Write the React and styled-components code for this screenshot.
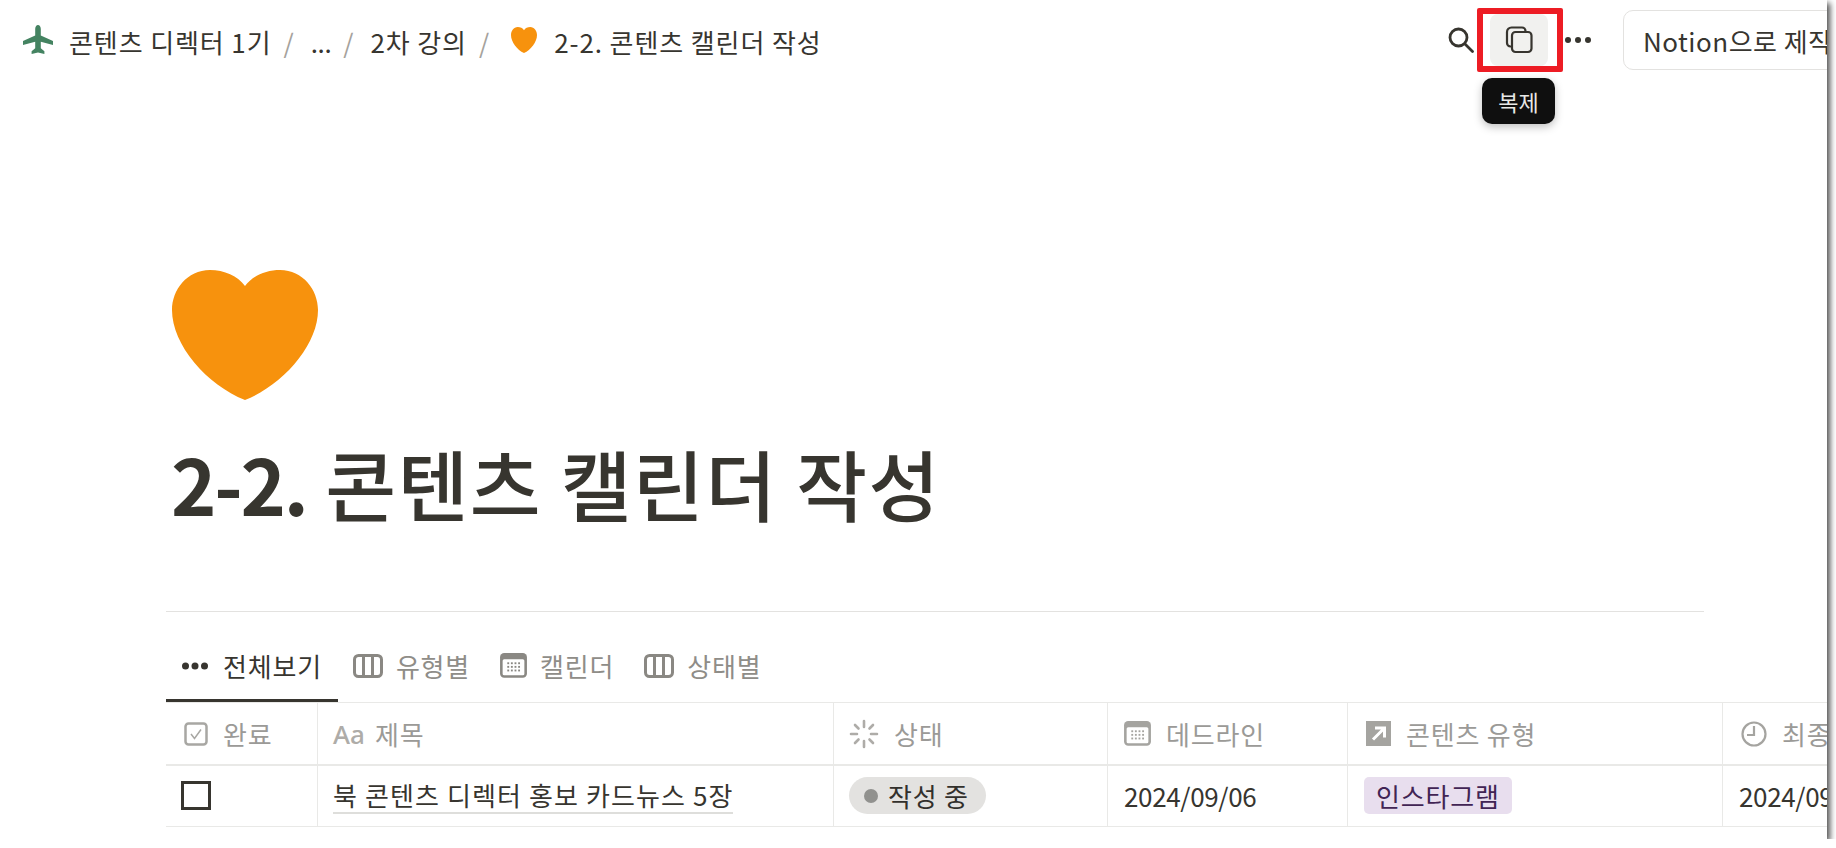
import React from "react";
import styled, { createGlobalStyle } from "styled-components";

const Global = createGlobalStyle`
  html, body { margin: 0; padding: 0; background: #fff; overflow: hidden; }
  body { font-family: "Noto Sans CJK KR", "Noto Sans", sans-serif; }
`;

const Frame = styled.div`
  width: 1827px;
  height: 839px;
  background: #fff;
  overflow: hidden;
  box-shadow: 3px 3px 6px rgba(0, 0, 0, 0.7);
  display: flex;
  flex-direction: column;
`;

const TopBar = styled.header`
  height: 80px;
  flex: none;
  display: flex;
  align-items: center;
  padding-left: 22px;
  color: #37352f;
`;

const Crumb = styled.span`
  font-size: 26px;
  line-height: 32px;
  margin-top: 3px;
  letter-spacing: ${(p) => p.$ls ?? 0.9}px;
  white-space: nowrap;
  color: #37352f;
`;

const Sep = styled.span`
  font-size: 26px;
  margin-top: 3px;
  color: #a5a29c;
  margin-left: 12px;
  margin-right: 17px;
`;

const CrumbIcon = styled.svg`
  flex: none;
  display: block;
  margin-left: ${(p) => p.$ml ?? 0}px;
  margin-right: ${(p) => p.$mr}px;
`;

const Actions = styled.div`
  margin-left: auto;
  margin-right: -36px;
  display: flex;
  align-items: center;
  flex: none;
`;

const SearchSlot = styled.div`
  width: 26px;
  height: 26px;
  margin-right: 16px;
  display: flex;
`;

const CopyAnchor = styled.div`
  position: relative;
  width: 58px;
  height: 52px;
  background: #f1f1ef;
  border-radius: 8px;
  display: flex;
  align-items: center;
  justify-content: center;
`;

const Highlight = styled.div`
  position: absolute;
  left: -13px;
  top: -6px;
  width: 86px;
  height: 64px;
  box-sizing: border-box;
  border: 6px solid #ed1c24;
  border-radius: 2px;
`;

const Tooltip = styled.div`
  position: absolute;
  left: -8px;
  top: 64px;
  width: 73px;
  height: 46px;
  border-radius: 10px;
  background: #0f0f0f;
  color: #e8e8e6;
  font-size: 22px;
  display: flex;
  align-items: center;
  justify-content: center;
  box-shadow: 0 3px 8px rgba(0, 0, 0, 0.25);
`;

const Dots = styled.div`
  display: flex;
  gap: 4px;
  width: 28px;
  margin-left: 16px;
  justify-content: center;
`;

const Dot = styled.span`
  width: 6px;
  height: 6px;
  border-radius: 50%;
  background: #37352f;
`;

const NotionButton = styled.div`
  margin-left: 31px;
  width: 240px;
  height: 60px;
  box-sizing: border-box;
  border: 1px solid #e3e2e0;
  border-radius: 10px;
  padding: 0 0 0 19px;
  display: flex;
  align-items: center;
  font-size: 26px;
  letter-spacing: 0.5px;
  white-space: nowrap;
  color: #37352f;
`;

const Content = styled.main`
  padding: 0 123px 0 166px;
  min-width: 0;
`;

const Hero = styled.div`
  padding-top: 190px;
  padding-left: 6px;
`;

const Title = styled.h1`
  margin: 38px 0 0 -1px;
  font-size: 77px;
  line-height: 90px;
  font-weight: 500;
  color: #37352f;
  letter-spacing: 1.4px;
  white-space: nowrap;
`;

const TitleNum = styled.span`
  font-weight: 700;
  letter-spacing: -2.2px;
`;

const Divider = styled.div`
  height: 1px;
  background: #e3e2e0;
  margin-top: 83px;
`;

const Tabs = styled.nav`
  height: 90px;
  display: flex;
  align-items: flex-end;
`;

const Tab = styled.div`
  display: flex;
  align-items: center;
  height: 56px;
  box-sizing: border-box;
  padding: 0 ${(p) => (p.$active ? 16 : 15)}px 14px ${(p) => (p.$active ? 16 : 15)}px;
  font-size: 26px;
  letter-spacing: 0.8px;
  white-space: nowrap;
  color: ${(p) => (p.$active ? "#37352f" : "#8f8d88")};
  border-bottom: 3px solid ${(p) => (p.$active ? "#37352f" : "transparent")};
  gap: ${(p) => (p.$active ? 15 : 13)}px;
`;

const Table = styled.div`
  width: 1800px;
  display: grid;
  grid-template-columns: 152px 516px 274px 240px 375px 243px;
  border-top: 1px solid #e9e9e7;
`;

const HeadCell = styled.div`
  height: 63px;
  box-sizing: border-box;
  padding-left: ${(p) => p.$pl ?? 18}px;
  display: flex;
  align-items: center;
  gap: ${(p) => p.$gap ?? 15}px;
  font-size: 26px;
  letter-spacing: 0.8px;
  color: #9b9a97;
  white-space: nowrap;
  border-right: 1px solid #e9e9e7;
  border-bottom: 2px solid #e9e9e7;
`;

const Cell = styled.div`
  height: 61px;
  box-sizing: border-box;
  padding-left: ${(p) => p.$pl ?? 16}px;
  padding-bottom: 1px;
  display: flex;
  align-items: center;
  font-size: 26px;
  letter-spacing: 0.8px;
  color: #37352f;
  white-space: nowrap;
  border-right: 1px solid #e9e9e7;
  border-bottom: 1px solid #e9e9e7;
`;

const DateText = styled.span`
  letter-spacing: -0.35px;
`;

const Box = styled.span`
  width: 30px;
  height: 29px;
  box-sizing: border-box;
  border: 3px solid #37352f;
  display: block;
`;

const LinkText = styled.span`
  border-bottom: 2px solid #dededb;
  line-height: 35px;
  letter-spacing: 1.1px;
  color: #37352f;
`;

const Pill = styled.span`
  display: flex;
  align-items: center;
  gap: 10px;
  height: 37px;
  padding: 0 17px 0 15px;
  border-radius: 19px;
  background: #e3e2e0;
  color: #32302c;
`;

const PillDot = styled.span`
  width: 14px;
  height: 14px;
  border-radius: 50%;
  background: #91918e;
`;

const Tag = styled.span`
  display: flex;
  align-items: center;
  height: 37px;
  padding: 0 12px;
  border-radius: 5px;
  background: #e8deee;
  color: #412454;
`;

const Aa = styled.span`
  font-family: "Noto Sans", sans-serif;
  font-size: 26px;
  font-weight: 500;
  letter-spacing: 0;
  color: #aeaca8;
`;

const Heart = ({ w, h, ml, mr }) => (
  <CrumbIcon $ml={ml} $mr={mr} width={w} height={h} viewBox="0 0 146 130" preserveAspectRatio="none">
    <path
      fill="#f7920d"
      d="M73 16C66 6 52 0 38 0C15 0 0 20 0 40C0 75 35 115 73 130C111 115 146 75 146 40C146 20 131 0 108 0C94 0 80 6 73 16Z"
    />
  </CrumbIcon>
);

const Plane = () => (
  <CrumbIcon $mr={15} width="32" height="32" viewBox="0 0 32 32">
    <path
      fill="#448361"
      d="M16 1c1.7 0 2.800 1.800 2.800 4v6.400L31 17v4l-12.200-3.200v6.400l3.600 3V30L16 28.500 9.600 30v-2.800l3.600-3v-6.400L1 21v-4l12.200-5.600V5c0-2.200 1.100-4 2.800-4Z"
    />
  </CrumbIcon>
);

const Search = () => (
  <svg width="26" height="26" viewBox="0 0 26 26" fill="none" stroke="#37352f" strokeWidth="2.800">
    <circle cx="10.500" cy="10.500" r="8.500" />
    <path d="M17 17l7.500 7.500" strokeLinecap="round" />
  </svg>
);

const Copy = () => (
  <svg width="28" height="28" viewBox="0 0 28 28" fill="none" stroke="#37352f" strokeWidth="2.200">
    <path d="M5.500 20.500A3.500 3.500 0 0 1 2 17V6a4.500 4.500 0 0 1 4.500-4.500H17A3.500 3.500 0 0 1 20.500 5" strokeLinecap="round" />
    <rect x="7" y="6" width="19.500" height="20" rx="3.500" />
  </svg>
);

const Columns = () => (
  <svg width="30" height="24" viewBox="0 0 30 24" fill="none" stroke="#8a8883" strokeWidth="3">
    <rect x="1.500" y="1.500" width="27" height="21" rx="4" />
    <path d="M10.500 2v20M19.500 2v20" />
  </svg>
);

const Calendar = ({ c = "#8a8883", size = 27 }) => (
  <svg width={size} height={size * 0.92} viewBox="0 0 26 24">
    <rect x="0" y="0" width="26" height="24" rx="4" fill={c} />
    <rect x="2.500" y="6" width="21" height="15.500" rx="1.500" fill="#fff" />
    {[0, 1, 2].map((r) =>
      [0, 1, 2, 3].map((k) => (
        <rect key={`${r}${k}`} x={7 + k * 3.5} y={9 + r * 3.5} width="1.800" height="1.800" fill={c} />
      ))
    )}
  </svg>
);

const ViewDots = () => (
  <svg width="26" height="8" viewBox="0 0 26 8" fill="#37352f">
    <circle cx="3.500" cy="4" r="3.500" />
    <circle cx="13" cy="4" r="3.500" />
    <circle cx="22.500" cy="4" r="3.500" />
  </svg>
);

const CheckIcon = () => (
  <svg width="24" height="24" viewBox="0 0 24 24" fill="none" stroke="#a8a7a3">
    <rect x="1.500" y="1.500" width="21" height="21" rx="3" strokeWidth="2.500" />
    <path d="M7 12l3.500 4.500L17 7.500" strokeWidth="1.500" />
  </svg>
);

const Spinner = () => (
  <svg width="30" height="30" viewBox="0 0 30 30" stroke="#aeaca8" strokeWidth="2.600" strokeLinecap="round">
    <path d="M15 2v6M15 22v6M2 15h6M22 15h6M6 6l3.500 3.500M20.500 20.500L24 24M24 6l-3.500 3.500M9.500 20.500L6 24" />
  </svg>
);

const ArrowBox = () => (
  <svg width="25" height="25" viewBox="0 0 25 25">
    <rect width="25" height="25" fill="#a5a4a0" />
    <path d="M7 18.500L17 8.500M9 7h9.500v9.500" fill="none" stroke="#fff" strokeWidth="3" />
  </svg>
);

const Clock = () => (
  <svg width="26" height="26" viewBox="0 0 26 26" fill="none" stroke="#a5a4a0" strokeWidth="2.200">
    <circle cx="13" cy="13" r="11.500" />
    <path d="M13 5v9H6" />
  </svg>
);

export default function App() {
  return (
    <>
      <Global />
      <Frame>
        <TopBar>
          <Plane />
          <Crumb>콘텐츠 디렉터 1기</Crumb>
          <Sep>/</Sep>
          <Crumb $ls={-0.4}>...</Crumb>
          <Sep>/</Sep>
          <Crumb>2차 강의</Crumb>
          <Sep>/</Sep>
          <Heart w={26} h={26} ml={5} mr={17} />
          <Crumb>2-2. 콘텐츠 캘린더 작성</Crumb>
          <Actions>
            <SearchSlot>
              <Search />
            </SearchSlot>
            <CopyAnchor>
              <Copy />
              <Highlight />
              <Tooltip>복제</Tooltip>
            </CopyAnchor>
            <Dots>
              <Dot />
              <Dot />
              <Dot />
            </Dots>
            <NotionButton>Notion으로 제작</NotionButton>
          </Actions>
        </TopBar>
        <Content>
          <Hero>
            <Heart w={146} h={130} mr={0} />
            <Title>
              <TitleNum>2-2.</TitleNum> 콘텐츠 캘린더 작성
            </Title>
          </Hero>
          <Divider />
          <Tabs>
            <Tab $active>
              <ViewDots />
              전체보기
            </Tab>
            <Tab>
              <Columns />
              유형별
            </Tab>
            <Tab>
              <Calendar />
              캘린더
            </Tab>
            <Tab>
              <Columns />
              상태별
            </Tab>
          </Tabs>
          <Table>
            <HeadCell>
              <CheckIcon />
              완료
            </HeadCell>
            <HeadCell $pl={15} $gap={10}>
              <Aa>Aa</Aa>
              제목
            </HeadCell>
            <HeadCell $pl={15}>
              <Spinner />
              상태
            </HeadCell>
            <HeadCell $pl={16}>
              <Calendar c="#a5a4a0" />
              데드라인
            </HeadCell>
            <HeadCell $pl={18}>
              <ArrowBox />
              콘텐츠 유형
            </HeadCell>
            <HeadCell $pl={18}>
              <Clock />
              최종 수정
            </HeadCell>
            <Cell $pl={15}>
              <Box />
            </Cell>
            <Cell $pl={15}>
              <LinkText>북 콘텐츠 디렉터 홍보 카드뉴스 5장</LinkText>
            </Cell>
            <Cell $pl={15}>
              <Pill>
                <PillDot />
                작성 중
              </Pill>
            </Cell>
            <Cell>
              <DateText>2024/09/06</DateText>
            </Cell>
            <Cell $pl={16}>
              <Tag>인스타그램</Tag>
            </Cell>
            <Cell>
              <DateText>2024/09/06</DateText>
            </Cell>
          </Table>
        </Content>
      </Frame>
    </>
  );
}
